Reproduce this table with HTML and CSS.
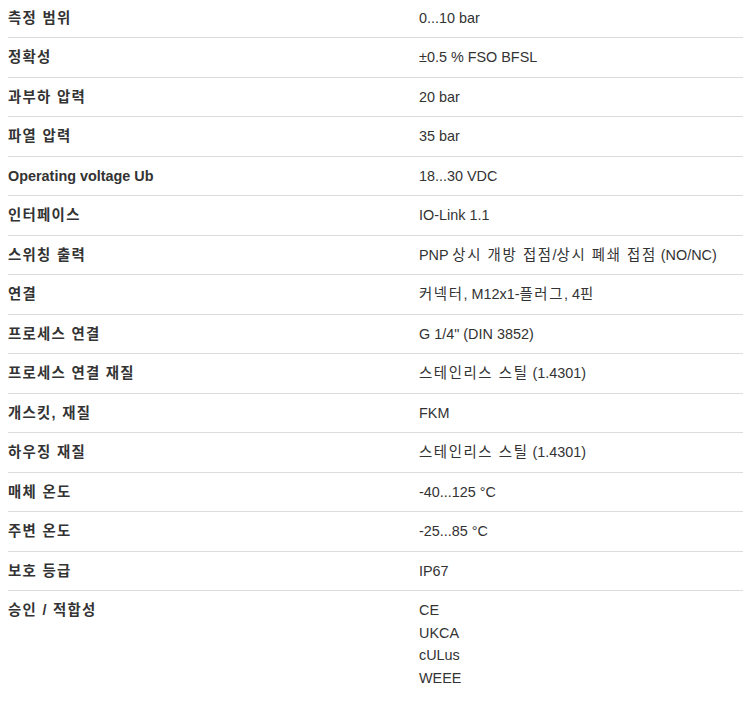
FILE: index.html
```html
<!DOCTYPE html>
<html lang="ko">
<head>
<meta charset="utf-8">
<link rel="stylesheet" href="styles.css">
</head>
<body>
<div class="specs">
  <div class="row"><div class="label ko-l">측정 범위</div><div class="value">0...10 bar</div></div>
  <div class="row"><div class="label ko-l">정확성</div><div class="value">±0.5 % FSO BFSL</div></div>
  <div class="row"><div class="label ko-l">과부하 압력</div><div class="value">20 bar</div></div>
  <div class="row"><div class="label ko-l">파열 압력</div><div class="value">35 bar</div></div>
  <div class="row"><div class="label">Operating voltage Ub</div><div class="value">18...30 VDC</div></div>
  <div class="row"><div class="label ko-l">인터페이스</div><div class="value">IO-Link 1.1</div></div>
  <div class="row"><div class="label ko-l">스위칭 출력</div><div class="value">PNP <span class="ko">상시 개방 접점</span>/<span class="ko">상시 폐쇄 접점</span> (NO/NC)</div></div>
  <div class="row"><div class="label ko-l">연결</div><div class="value"><span class="ko">커넥터</span>, M12x1-<span class="ko">플러그</span>, 4<span class="ko">핀</span></div></div>
  <div class="row"><div class="label ko-l">프로세스 연결</div><div class="value">G 1/4" (DIN 3852)</div></div>
  <div class="row"><div class="label ko-l">프로세스 연결 재질</div><div class="value"><span class="ko">스테인리스 스틸</span> (1.4301)</div></div>
  <div class="row"><div class="label ko-l">개스킷, 재질</div><div class="value">FKM</div></div>
  <div class="row"><div class="label ko-l">하우징 재질</div><div class="value"><span class="ko">스테인리스 스틸</span> (1.4301)</div></div>
  <div class="row"><div class="label ko-l">매체 온도</div><div class="value">-40...125 °C</div></div>
  <div class="row"><div class="label ko-l">주변 온도</div><div class="value">-25...85 °C</div></div>
  <div class="row"><div class="label ko-l">보호 등급</div><div class="value">IP67</div></div>
  <div class="row last"><div class="label ko-l">승인 / 적합성</div><div class="value"><div>CE</div><div>UKCA</div><div>cULus</div><div>WEEE</div></div></div>
</div>
</body>
</html>
```
FILE: styles.css
```css
html, body {
  background: #fff;
}
body {
  margin: 0 0 0 8px;
  font-family: "Liberation Sans", "Noto Sans CJK KR", Arial, sans-serif;
  font-size: 14.4px;
  line-height: 22.67px;
  color: #333;
}
.specs {
  margin-top: -1.5px;
}
.row {
  display: grid;
  grid-template-columns: 411px 1fr;
  padding: 8px 0 7.83px;
  border-bottom: 1px solid #dcdcdc;
}
.row.last {
  border-bottom: none;
}
.label {
  font-weight: bold;
}
.ko-l {
  letter-spacing: 1.3px;
}
.ko {
  letter-spacing: 1.6px;
}
```
